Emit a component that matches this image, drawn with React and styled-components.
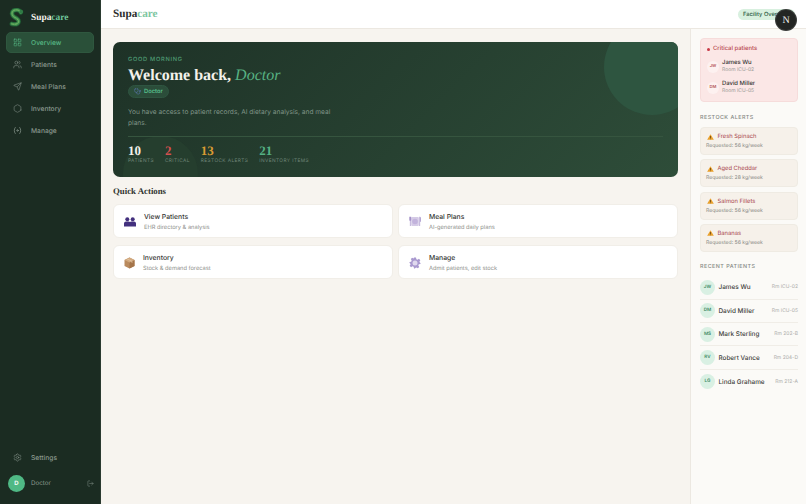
import * as React from 'react'
import styled, { createGlobalStyle } from 'styled-components'
import { LayoutGrid, Users, Send, Hexagon, Settings, LogOut, Stethoscope } from 'lucide-react'

const SANS = `"Inter", "Noto Sans", sans-serif`
const SERIF = `"Liberation Serif", "DejaVu Serif", serif`

const GlobalStyle = createGlobalStyle`
  html, body {
    margin: 0;
    height: 100%;
    overflow: hidden;
    background: #f7f4ef;
    font-family: ${SANS};
    text-rendering: geometricPrecision;
    -webkit-font-smoothing: antialiased;
  }
  #root { height: 100%; }
  * { box-sizing: border-box; }
`

const Page = styled.div`
  display: flex;
  height: 504px;
  width: 806px;
  overflow: hidden;
`

const Sidebar = styled.aside`
  width: 101px;
  flex-shrink: 0;
  display: flex;
  flex-direction: column;
  background: #1b2c22;
  border-right: 1px solid #2a3a30;
`

const Brand = styled.div`
  display: flex;
  align-items: center;
  gap: 7px;
  height: 32px;
  padding: 3px 0 0 9px;
`

const BrandName = styled.span`
  font-family: ${SERIF};
  font-size: 9.4px;
  font-weight: 700;
  color: #f4f2ec;
  span { color: #6fc79a; font-weight: 700; }
`

const Nav = styled.nav`
  display: flex;
  flex-direction: column;
  gap: 1px;
  padding: 0 6px;
  flex: 1;
`

const NavItem = styled.div`
  display: flex;
  align-items: center;
  gap: 9px;
  height: 21px;
  padding-left: 6px;
  border-radius: 5px;
  font-size: 6.7px;
  font-weight: 500;
  color: ${p => (p.$active ? '#57b985' : '#8a988e')};
  background: ${p => (p.$active ? '#2a5039' : 'transparent')};
  border: ${p => (p.$active ? '1px solid #2f573f' : '1px solid transparent')};
  svg {
    width: 9px;
    height: 9px;
    flex-shrink: 0;
    color: ${p => (p.$active ? '#57b985' : '#84938a')};
  }
`

const SidebarFooter = styled.div`
  display: flex;
  flex-direction: column;
  padding: 0 6px 12px;
  gap: 7px;
`

const UserRow = styled.div`
  display: flex;
  align-items: center;
  padding-left: 2px;
  font-size: 6.2px;
  color: #8f9d93;
  svg { width: 7px; height: 7px; margin: 0 0 0 auto; }
`

const UserAvatar = styled.div`
  width: 17px;
  height: 17px;
  border-radius: 50%;
  background: #4fb985;
  color: #f1faf5;
  font-size: 6px;
  font-weight: 700;
  display: flex;
  align-items: center;
  justify-content: center;
  margin-right: 6px;
`

const Main = styled.div`
  flex: 1;
  min-width: 0;
  display: flex;
  flex-direction: column;
`

const Topbar = styled.header`
  height: 29px;
  flex-shrink: 0;
  display: flex;
  align-items: center;
  justify-content: space-between;
  padding: 0 11px 0 12px;
  background: #ffffff;
  border-bottom: 1px solid #ece8e1;
`

const TopTitle = styled.div`
  font-family: ${SERIF};
  font-size: 11.2px;
  font-weight: 700;
  color: #2a2c2a;
  span { color: #7cc6a0; font-weight: 700; }
`

const Pill = styled.div`
  height: 11px;
  width: 57px;
  padding-left: 5px;
  border-radius: 6px;
  background: #d8f0df;
  color: #2b5a41;
  font-size: 5.7px;
  font-weight: 500;
  line-height: 11px;
  white-space: nowrap;
  overflow: hidden;
`

const DevBadge = styled.div`
  position: absolute;
  left: 776px;
  top: 10px;
  width: 20px;
  height: 20px;
  border-radius: 50%;
  background: #232523;
  color: #f3f3f3;
  font-family: ${SERIF};
  font-size: 10px;
  display: flex;
  align-items: center;
  justify-content: center;
  box-shadow: 0 0 0 1px #3a3c3a;
`

const Body = styled.div`
  flex: 1;
  min-height: 0;
  display: flex;
`

const Content = styled.main`
  flex: 1;
  min-width: 0;
  padding: 13px 12px 0;
`

const Hero = styled.section`
  position: relative;
  overflow: hidden;
  height: 135px;
  padding: 14px 15px 0;
  border-radius: 7px;
  background: linear-gradient(135deg, #1e3227 0%, #2e4d39 100%);
`

const HeroCircle = styled.div`
  position: absolute;
  border-radius: 50%;
  width: ${p => p.$size}px;
  height: ${p => p.$size}px;
  background: ${p => p.$color};
  ${p => p.$top !== undefined && `top: ${p.$top}px;`}
  ${p => p.$right !== undefined && `right: ${p.$right}px;`}
  ${p => p.$bottom !== undefined && `bottom: ${p.$bottom}px;`}
  ${p => p.$left !== undefined && `left: ${p.$left}px;`}
`

const HeroInner = styled.div`
  position: relative;
`

const Greeting = styled.div`
  font-size: 5.7px;
  font-weight: 500;
  letter-spacing: 0.7px;
  line-height: 8px;
  color: #4f9d75;
`

const Welcome = styled.h1`
  margin: 3px 0 1px;
  font-family: ${SERIF};
  font-size: 16px;
  line-height: 17px;
  font-weight: 700;
  color: #f3f1ea;
  em {
    font-weight: 400;
    color: #57b283;
  }
`

const RoleBadge = styled.div`
  display: flex;
  align-items: center;
  gap: 3px;
  height: 13px;
  width: 41px;
  padding-left: 5px;
  border-radius: 7px;
  background: #2b4d3a;
  border: 1px solid #2f5541;
  color: #56bd8a;
  font-size: 5.8px;
  font-weight: 600;
  svg { width: 7px; height: 7px; color: #5a76a8; }
`

const HeroText = styled.p`
  margin: 8.5px 0 0;
  width: 210px;
  font-size: 6.6px;
  line-height: 11px;
  color: #7f9386;
`

const Stats = styled.div`
  display: flex;
  gap: 11px;
  margin-top: 7.5px;
  padding-top: 7px;
  border-top: 1px solid #36553f;
`

const Stat = styled.div`
  display: flex;
  flex-direction: column;
  gap: 1px;
`

const StatValue = styled.div`
  font-family: ${SERIF};
  font-size: 13px;
  line-height: 13px;
  font-weight: 700;
  color: ${p => p.$color};
`

const StatLabel = styled.div`
  font-size: 4.8px;
  letter-spacing: 0.4px;
  line-height: 7px;
  color: #71877a;
  white-space: nowrap;
`

const SectionTitle = styled.h2`
  margin: 9px 0 8px;
  font-family: ${SERIF};
  font-size: 8.8px;
  line-height: 10px;
  font-weight: 700;
  color: #333632;
`

const ActionGrid = styled.div`
  display: grid;
  grid-template-columns: 1fr 1fr;
  gap: 7px 5px;
`

const ActionCard = styled.div`
  height: 34px;
  display: flex;
  align-items: center;
  gap: 8px;
  padding: 1px 0 0 10px;
  background: #ffffff;
  border: 1px solid #f1eee8;
  border-radius: 6px;
  svg { flex-shrink: 0; }
`

const ActionTitle = styled.div`
  font-size: 6.8px;
  font-weight: 500;
  line-height: 11px;
  color: #343633;
`

const ActionSub = styled.div`
  font-size: 5.7px;
  line-height: 11px;
  color: #8d8f8b;
`

const RightPanel = styled.aside`
  width: 116px;
  flex-shrink: 0;
  padding: 9px 8px 0 9px;
  background: #fbfaf7;
  border-left: 1px solid #ece8e1;
`

const CriticalCard = styled.div`
  height: 64px;
  padding: 6px;
  border-radius: 4px;
  background: #fbe7e6;
  border: 1px solid #f6dcdb;
`

const CriticalTitle = styled.div`
  display: flex;
  align-items: center;
  gap: 3px;
  font-size: 5.9px;
  font-weight: 500;
  line-height: 8px;
  color: #b8484f;
  margin-bottom: 3px;
  i {
    width: 3px;
    height: 3px;
    border-radius: 50%;
    background: #c93a47;
  }
`

const CriticalRow = styled.div`
  display: flex;
  align-items: center;
  gap: 3px;
  height: 21px;
`

const CriticalAvatar = styled.div`
  width: 12px;
  height: 12px;
  border-radius: 50%;
  background: #fdf1f0;
  color: #b5555b;
  font-size: 4.2px;
  font-weight: 600;
  display: flex;
  align-items: center;
  justify-content: center;
`

const PersonName = styled.div`
  font-size: 5.9px;
  font-weight: 500;
  line-height: 8px;
  color: #343633;
`

const PersonRoom = styled.div`
  font-size: 5px;
  line-height: 7px;
  color: #9a9a97;
`

const PanelLabel = styled.div`
  margin: ${p => p.$top}px 0 ${p => p.$bottom}px;
  font-size: 5.4px;
  letter-spacing: 0.45px;
  line-height: 7px;
  font-weight: 500;
  color: #858883;
`

const AlertList = styled.div`
  display: flex;
  flex-direction: column;
  gap: 4.3px;
`

const AlertCard = styled.div`
  height: 28px;
  padding: 4px 5px 0;
  border-radius: 4px;
  background: #f6f1ea;
  border: 1px solid #efebe3;
`

const AlertName = styled.div`
  display: flex;
  align-items: center;
  gap: 3.5px;
  padding-left: 1px;
  font-size: 5.8px;
  line-height: 9px;
  font-weight: 400;
  color: #a8454c;
`

const AlertQty = styled.div`
  font-size: 5.1px;
  line-height: 9px;
  margin-top: 1px;
  color: #858782;
`

const RecentRow = styled.div`
  display: flex;
  align-items: center;
  gap: 3.5px;
  height: 23.4px;
  border-bottom: ${p => (p.$last ? 'none' : '1px solid #f0ede7')};
`

const RecentAvatar = styled.div`
  width: 15px;
  height: 15px;
  border-radius: 50%;
  background: #d9f0e3;
  color: #3c8a63;
  font-size: 4.6px;
  font-weight: 600;
  display: flex;
  align-items: center;
  justify-content: center;
`

const RecentName = styled.div`
  font-size: 6.4px;
  font-weight: 500;
  color: #3b3d3a;
`

const RecentRoom = styled.div`
  margin-left: auto;
  font-size: 5px;
  color: #acacaa;
`

const SNAKE_BODY = 'M11.8 4.4C10.8 2 7 1.2 4.6 2.6 2 4.3 2.8 7.8 5.8 9.4c2.6 1.3 4.4 2.6 3.7 4.8-.7 1.9-3.300 2.500-6.700 1.700'

const SnakeLogo = () => (
  <svg width="15" height="20" viewBox="0 0 15 20" fill="none">
    <path d={SNAKE_BODY} stroke="#1f5a33" strokeWidth="4.6" strokeLinecap="round" />
    <path d={SNAKE_BODY} stroke="#3f8f4e" strokeWidth="3" strokeLinecap="round" />
    <path d={SNAKE_BODY} stroke="#86c06a" strokeWidth=".8" strokeLinecap="round" strokeDasharray="2 1.2" />
    <circle cx="12.3" cy="3.6" r="1.8" fill="#2f7a45" />
  </svg>
)

const ManageIcon = () => (
  <svg viewBox="0 0 24 24" fill="none" stroke="currentColor" strokeWidth="2" strokeLinecap="round">
    <path d="M6 4C2.500 8.500 2.500 15.500 6 20" />
    <path d="M18 4c3.500 4.500 3.500 11.500 0 16" />
    <circle cx="12" cy="12" r="2" />
  </svg>
)

const PeopleIcon = () => (
  <svg width="12" height="10" viewBox="0 0 12 10" fill="#43307e">
    <circle cx="3.300" cy="2.200" r="2" />
    <circle cx="8.700" cy="2.200" r="2" />
    <path d="M0 9.500V6.600C0 5.200 1 4.500 2 4.500h2.600c.6 0 1 .2 1.400.6.400-.4.800-.6 1.400-.6H10c1 0 2 .7 2 2.100v2.900H0z" />
  </svg>
)

const PlateIcon = () => (
  <svg width="12" height="11" viewBox="0 0 12 11">
    <rect x="2.200" y="1" width="7.600" height="9" rx="1" fill="#d5cbe6" />
    <circle cx="6" cy="5.500" r="2.800" fill="#c2b3dc" />
    <path d="M.3 .8v3.400l.6.700V10h.7V4.900l.6-.700V.8M10.400 .8v9.200h.7V6l.7-.5V2c0-.8-.6-1.200-1.400-1.200z" fill="#a491c8" />
  </svg>
)

const BoxIcon = () => (
  <svg width="11" height="12" viewBox="0 0 11 12">
    <path d="M5.500 .5l5 2.500v6l-5 2.500-5-2.500V3z" fill="#b98a5e" />
    <path d="M5.500 5.500l5-2.500v6l-5 2.500z" fill="#a4744a" />
    <path d="M5.500 .5l5 2.500-5 2.500L.5 3z" fill="#d2a97f" />
    <path d="M3 1.800l5 2.500v1.500" stroke="#e3c7a4" strokeWidth=".8" fill="none" />
  </svg>
)

const GearIcon = () => (
  <svg width="12" height="12" viewBox="0 0 24 24">
    <path fill="#a999cf" d="M10 1h4l.7 3.300 2.300 1 2.900-1.800 2.800 2.800-1.800 2.900 1 2.300L23 12l-.1 2-3.200.7-1 2.300 1.800 2.900-2.800 2.800-2.900-1.800-2.300 1L12 23l-2-.1-.7-3.200-2.300-1-2.900 1.800-2.800-2.800 1.800-2.900-1-2.300L1 12l.1-2 3.200-.7 1-2.300-1.800-2.900 2.800-2.800L9.200 3z" />
    <circle cx="12" cy="12" r="5" fill="#e0d9ee" />
  </svg>
)

const WarnIcon = () => (
  <svg width="7" height="6" viewBox="0 0 14 12">
    <path d="M7 .5L13.700 11.500H.3z" fill="#e8a02c" />
    <rect x="6.300" y="4" width="1.400" height="4" fill="#5b3a0c" />
    <rect x="6.300" y="9" width="1.400" height="1.400" fill="#5b3a0c" />
  </svg>
)

const NAV = [
  { label: 'Overview', Icon: LayoutGrid, active: true },
  { label: 'Patients', Icon: Users },
  { label: 'Meal Plans', Icon: Send },
  { label: 'Inventory', Icon: Hexagon },
  { label: 'Manage', Icon: ManageIcon },
]

const STATS = [
  { value: '10', label: 'PATIENTS', color: '#f3f1ea' },
  { value: '2', label: 'CRITICAL', color: '#d4504f' },
  { value: '13', label: 'RESTOCK ALERTS', color: '#d99a33' },
  { value: '21', label: 'INVENTORY ITEMS', color: '#55b184' },
]

const ACTIONS = [
  { title: 'View Patients', sub: 'EHR directory & analysis', Icon: PeopleIcon },
  { title: 'Meal Plans', sub: 'AI-generated daily plans', Icon: PlateIcon },
  { title: 'Inventory', sub: 'Stock & demand forecast', Icon: BoxIcon },
  { title: 'Manage', sub: 'Admit patients, edit stock', Icon: GearIcon },
]

const CRITICAL = [
  { initials: 'JW', name: 'James Wu', room: 'Room ICU-02' },
  { initials: 'DM', name: 'David Miller', room: 'Room ICU-05' },
]

const ALERTS = [
  { name: 'Fresh Spinach', qty: 'Requested: 56 kg/week' },
  { name: 'Aged Cheddar', qty: 'Requested: 28 kg/week' },
  { name: 'Salmon Fillets', qty: 'Requested: 56 kg/week' },
  { name: 'Bananas', qty: 'Requested: 56 kg/week' },
]

const RECENT = [
  { initials: 'JW', name: 'James Wu', room: 'Rm ICU-02' },
  { initials: 'DM', name: 'David Miller', room: 'Rm ICU-05' },
  { initials: 'MS', name: 'Mark Sterling', room: 'Rm 202-B' },
  { initials: 'RV', name: 'Robert Vance', room: 'Rm 204-D' },
  { initials: 'LG', name: 'Linda Grahame', room: 'Rm 212-A' },
]

const App = () => {
  return (
    <Page>
      <GlobalStyle />
      <Sidebar>
        <Brand>
          <SnakeLogo />
          <BrandName>Supa<span>care</span></BrandName>
        </Brand>
        <Nav>
          {NAV.map(({ label, Icon, active }) => (
            <NavItem key={label} $active={active}>
              <Icon strokeWidth={1.5} />
              {label}
            </NavItem>
          ))}
        </Nav>
        <SidebarFooter>
          <NavItem>
            <Settings strokeWidth={1.5} />
            Settings
          </NavItem>
          <UserRow>
            <UserAvatar>D</UserAvatar>
            Doctor
            <LogOut strokeWidth={1.5} />
          </UserRow>
        </SidebarFooter>
      </Sidebar>
      <Main>
        <Topbar>
          <TopTitle>Supa<span>care</span></TopTitle>
          <Pill>Facility Overview</Pill>
        </Topbar>
        <Body>
          <Content>
            <Hero>
              <HeroCircle $size={96} $top={-23} $right={-22} $color="#2e5540" />
              <HeroCircle $size={75} $bottom={-34} $left={10} $color="#253e2e" />
              <HeroInner>
                <Greeting>GOOD MORNING</Greeting>
                <Welcome>Welcome back, <em>Doctor</em></Welcome>
                <RoleBadge><Stethoscope />Doctor</RoleBadge>
                <HeroText>You have access to patient records, AI dietary analysis, and meal plans.</HeroText>
                <Stats>
                  {STATS.map(s => (
                    <Stat key={s.label}>
                      <StatValue $color={s.color}>{s.value}</StatValue>
                      <StatLabel>{s.label}</StatLabel>
                    </Stat>
                  ))}
                </Stats>
              </HeroInner>
            </Hero>
            <SectionTitle>Quick Actions</SectionTitle>
            <ActionGrid>
              {ACTIONS.map(({ title, sub, Icon }) => (
                <ActionCard key={title}>
                  <Icon />
                  <div>
                    <ActionTitle>{title}</ActionTitle>
                    <ActionSub>{sub}</ActionSub>
                  </div>
                </ActionCard>
              ))}
            </ActionGrid>
          </Content>
          <RightPanel>
            <CriticalCard>
              <CriticalTitle><i />Critical patients</CriticalTitle>
              {CRITICAL.map(p => (
                <CriticalRow key={p.initials}>
                  <CriticalAvatar>{p.initials}</CriticalAvatar>
                  <div>
                    <PersonName>{p.name}</PersonName>
                    <PersonRoom>{p.room}</PersonRoom>
                  </div>
                </CriticalRow>
              ))}
            </CriticalCard>
            <PanelLabel $top={13} $bottom={5}>RESTOCK ALERTS</PanelLabel>
            <AlertList>
              {ALERTS.map(a => (
                <AlertCard key={a.name}>
                  <AlertName><WarnIcon />{a.name}</AlertName>
                  <AlertQty>{a.qty}</AlertQty>
                </AlertCard>
              ))}
            </AlertList>
            <PanelLabel $top={12} $bottom={5.4}>RECENT PATIENTS</PanelLabel>
            {RECENT.map((p, i) => (
              <RecentRow key={p.initials} $last={i === RECENT.length - 1}>
                <RecentAvatar>{p.initials}</RecentAvatar>
                <RecentName>{p.name}</RecentName>
                <RecentRoom>{p.room}</RecentRoom>
              </RecentRow>
            ))}
          </RightPanel>
        </Body>
      </Main>
      <DevBadge>N</DevBadge>
    </Page>
  )
}

export default App
